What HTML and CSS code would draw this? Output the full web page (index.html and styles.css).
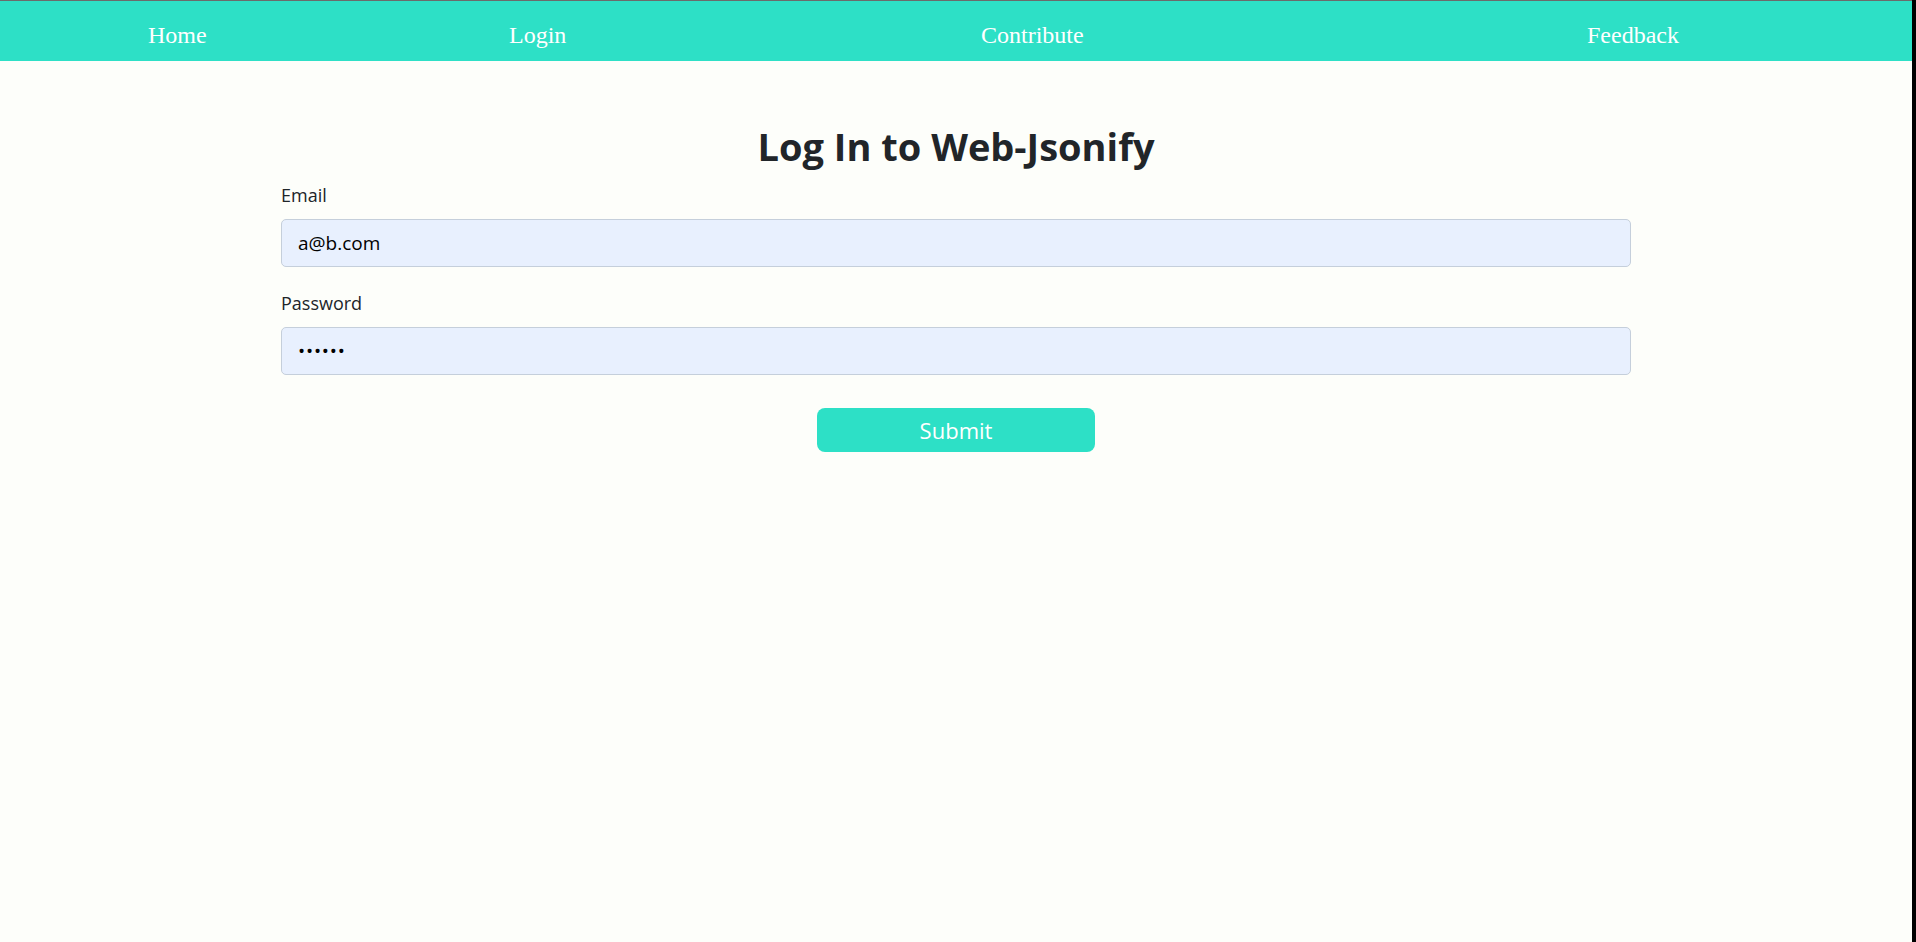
FILE: index.html
```html
<!DOCTYPE html>
<html lang="en">
<head>
<meta charset="utf-8">
<title>Log In to Web-Jsonify</title>
<link rel="stylesheet" href="styles.css">
</head>
<body>
<div class="frame">
  <div class="page">
    <nav class="navbar">
      <a class="nav-link" href="#">Home</a>
      <a class="nav-link" href="#">Login</a>
      <a class="nav-link" href="#">Contribute</a>
      <a class="nav-link" href="#">Feedback</a>
    </nav>
    <main class="container">
      <h2 class="title">Log In to Web-Jsonify</h2>
      <form class="login-form">
        <div class="field">
          <label class="field-label" for="email">Email</label>
          <input class="field-input" id="email" type="email" value="a@b.com">
        </div>
        <div class="field">
          <label class="field-label" for="password">Password</label>
          <input class="field-input field-secret" id="password" type="password" value="123456">
        </div>
        <button class="submit-btn" type="button">Submit</button>
      </form>
    </main>
  </div>
  <div class="edge"></div>
</div>
</body>
</html>
```
FILE: styles.css
```css
html, body {
  margin: 0;
  padding: 0;
}

body {
  background: #fdfefa;
  font-family: "Open Sans", "Noto Sans", sans-serif;
  color: #212529;
}

.frame {
  display: flex;
  min-height: 100vh;
}

.page {
  flex: 1;
  border-top: 1px solid #6b6b6b;
  background: #fdfefa;
}

.edge {
  width: 4px;
  background: #000;
}

.navbar {
  box-sizing: border-box;
  height: 60px;
  padding: 22px 0 0 148px;
  background: #2de0c6;
  display: grid;
  grid-template-columns: 361px 472px 606px 1fr;
  align-items: start;
}

.nav-link {
  justify-self: start;
  font-family: "Liberation Serif", "Times New Roman", serif;
  font-size: 24px;
  line-height: 24px;
  color: #ffffff;
  text-decoration: none;
}

.container {
  width: 1350px;
  margin: 0 auto;
}

.title {
  margin: 62px 0 11px;
  text-align: center;
  font-size: 38px;
  line-height: 46px;
  font-weight: 700;
  color: #212529;
}

.login-form {
  display: flex;
  flex-direction: column;
}

.field {
  display: flex;
  flex-direction: column;
  margin-bottom: 21px;
}

.field:last-of-type {
  margin-bottom: 0;
}

.field-label {
  font-size: 18px;
  line-height: 30px;
  margin-bottom: 9px;
  color: #212529;
}

.field-input {
  box-sizing: border-box;
  height: 48px;
  padding: 0 16px;
  border: 1px solid #c5cfdb;
  border-radius: 5px;
  background: #e8f0fe;
  font-family: "Open Sans", "Noto Sans", sans-serif;
  font-size: 19px;
  color: #000;
  outline: none;
}

.field-secret {
  letter-spacing: 0.8px;
}

.submit-btn {
  align-self: center;
  width: 278px;
  height: 44px;
  margin-top: 33px;
  border: none;
  border-radius: 8px;
  background: #2de0c6;
  color: #ffffff;
  font-family: "Open Sans", "Noto Sans", sans-serif;
  font-size: 22px;
  line-height: 1;
  cursor: pointer;
}
```
